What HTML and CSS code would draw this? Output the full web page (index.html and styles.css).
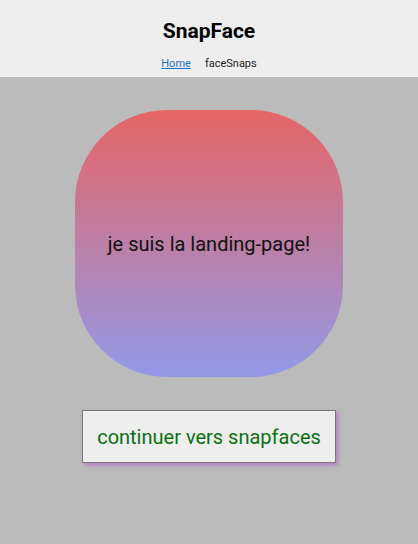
FILE: index.html
```html
<!DOCTYPE html>
<html lang="fr">
<head>
<meta charset="utf-8">
<title>SnapFace</title>
<link rel="stylesheet" href="styles.css">
</head>
<body>
<header class="header">
  <h1 class="title">SnapFace</h1>
  <nav class="nav">
    <a class="nav-link active" href="#">Home</a>
    <span class="nav-link">faceSnaps</span>
  </nav>
</header>
<main class="landing">
  <div class="blob">
    <p class="blob-text">je suis la landing-page!</p>
  </div>
  <button class="continue">continuer vers snapfaces</button>
</main>
</body>
</html>
```
FILE: styles.css
```css
html, body {
  margin: 0;
  padding: 0;
}
body {
  background: #bbbbbb;
  font-family: Roboto, "Liberation Sans", sans-serif;
  min-height: 544px;
}
.header {
  background: #eeeeee;
  height: 77px;
  display: flex;
  flex-direction: column;
  align-items: center;
  box-sizing: border-box;
  padding-top: 19px;
}
.title {
  margin: 0;
  font-size: 21px;
  font-weight: 700;
  line-height: 24px;
  color: #000;
}
.nav {
  margin-top: 14px;
  display: flex;
  gap: 14px;
  font-size: 11px;
  line-height: 13px;
}
.nav-link {
  color: #222;
  text-decoration: none;
}
.nav-link.active {
  color: #1a73c8;
  text-decoration: underline;
}
.landing {
  display: flex;
  flex-direction: column;
  align-items: center;
  padding-top: 33px;
}
.blob {
  width: 268px;
  height: 267px;
  border-radius: 92px;
  background: linear-gradient(to bottom, #e66565, #9299e8);
  display: flex;
  align-items: center;
  justify-content: center;
}
.blob-text {
  margin: 0;
  font-size: 20px;
  color: #111;
}
.continue {
  margin-top: 33px;
  width: 254px;
  height: 53px;
  background: #eeeeee;
  border: 1px solid #777777;
  box-shadow: 2px 2px 4px #b47ac4;
  font-family: Roboto, "Liberation Sans", sans-serif;
  font-size: 20px;
  color: #0a7010;
  padding: 0;
  cursor: pointer;
}
```
